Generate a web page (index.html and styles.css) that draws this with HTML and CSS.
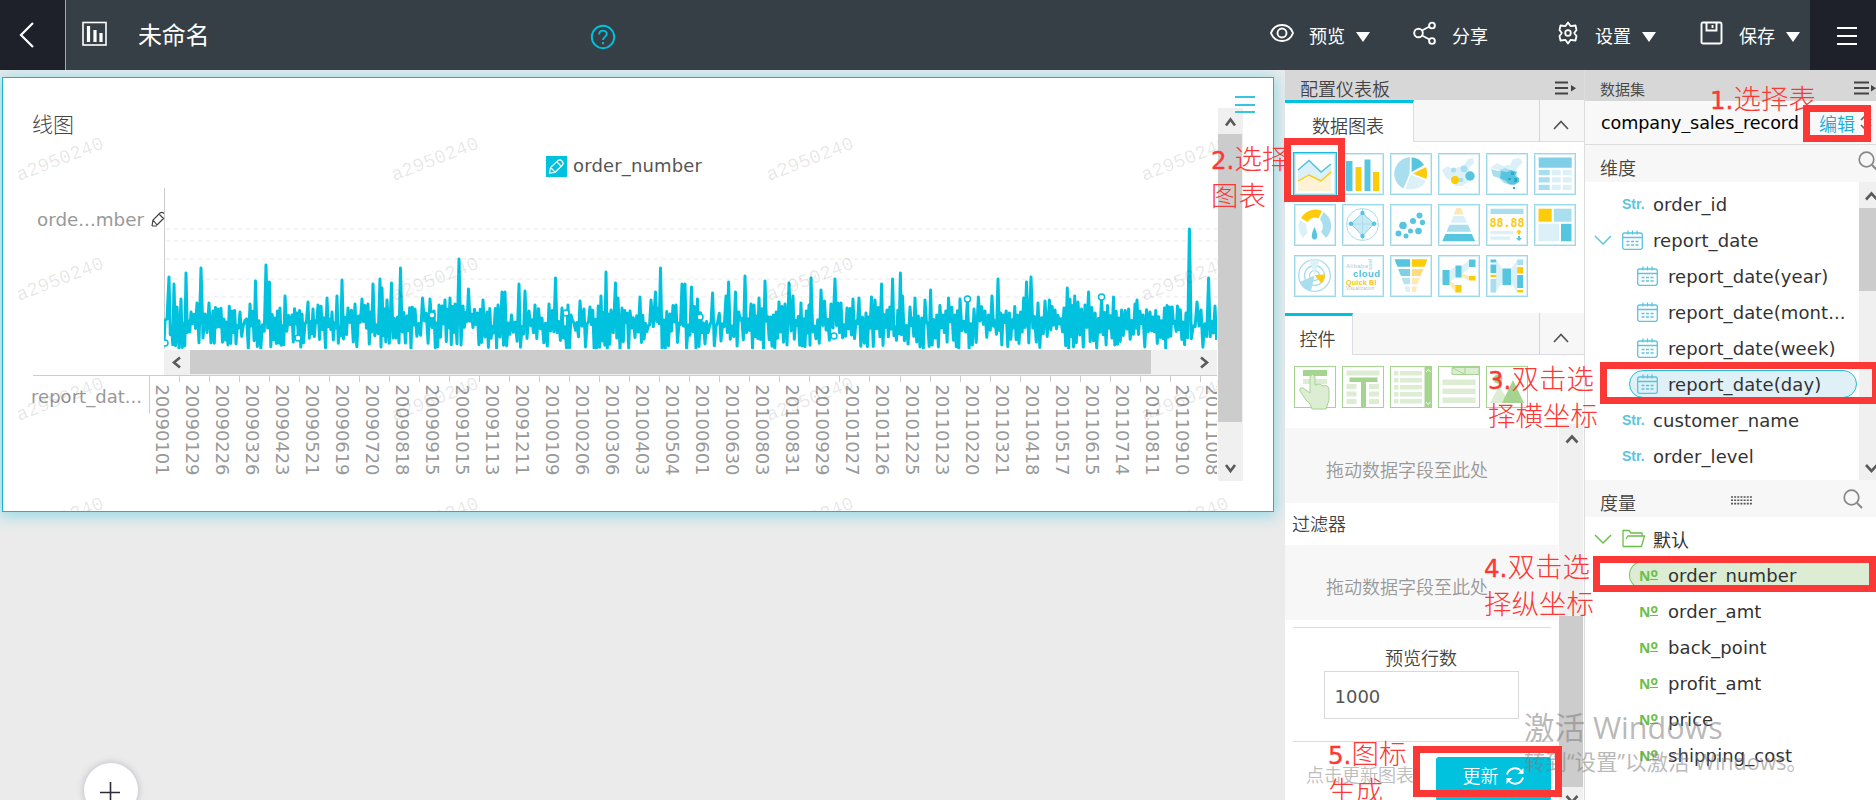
FILE: index.html
```html
<!DOCTYPE html>
<html lang="zh-CN">
<head>
<meta charset="utf-8">
<title>未命名</title>
<link rel="stylesheet" href="styles.css">
</head>
<body>
<div class="app">
  <header class="topbar">
    <div class="back"><svg width="66" height="70"><path d="M33 23 21 35 33 47" fill="none" stroke="#fff" stroke-width="2.200"/></svg></div>
    <svg class="logo" width="26" height="26"><rect x="1" y="1.5" width="23" height="22.5" fill="none" stroke="#fff" stroke-width="1.6"/><path d="M6.5 5v16M13 9v12M19 12v9" stroke="#fff" stroke-width="3.2"/></svg>
    <div class="doc-title">未命名</div>
    <svg class="help" width="26" height="26" fill="none" stroke="#00c1de" stroke-width="1.9"><circle cx="13" cy="13" r="11.2"/><path d="M9.2 10.4c0-5 7.6-5 7.6-.3 0 2.8-3.8 2.8-3.8 6"/><path d="M13 18v2.2"/></svg>
    <nav class="actions">
      <div class="action a-view"><svg width="24" height="24" fill="none" stroke="#fff" stroke-width="1.9"><path d="M1 12C3 6.500 7.500 4 12 4s9 2.500 11 8c-2 5.500-6.500 8-11 8S3 17.500 1 12z"/><circle cx="12" cy="12" r="4.500"/></svg><span>预览</span><i class="tri"></i></div>
      <div class="action a-share"><svg width="24" height="24" fill="none" stroke="#fff" stroke-width="1.9"><circle cx="5.500" cy="12" r="4.300"/><circle cx="19" cy="4.500" r="2.900"/><circle cx="19" cy="20" r="2.900"/><path d="M9 9.500l7.500-4M9 14.500l7.500 4"/></svg><span>分享</span></div>
      <div class="action a-set"><svg width="24" height="24" fill="none" stroke="#fff" stroke-width="1.8"><path d="M12 1.500l2.500 3.600 5-.6 1 4.500-2.300 3 2.300 3-1 4.500-5-.6L12 22.500l-2.500-3.600-5 .6-1-4.500 2.300-3-2.300-3 1-4.500 5 .6z" stroke-linejoin="round"/><circle cx="12" cy="12" r="2.800"/></svg><span>设置</span><i class="tri"></i></div>
      <div class="action a-save"><svg width="24" height="24" fill="none" stroke="#fff" stroke-width="1.9"><rect x="1.500" y="1.500" width="20" height="21" rx="1.500"/><path d="M6.500 2v7.500h10V2M12.500 4v3"/></svg><span>保存</span><i class="tri"></i></div>
    </nav>
    <div class="burger"><i></i><i></i><i></i></div>
  </header>

  <div class="work">
    <main class="canvas">
      <section class="card">
        <div class="card-title">线图</div>
        <div class="legend"><svg width="21" height="21"><rect width="21" height="21" fill="#00c1de"/><g fill="none" stroke="#fff" stroke-width="1.200"><path d="M3.500 17l1-5.500L12 4.500q2-1.500 4 .5t.5 4L9 16.500z"/><path d="M11 6l4.500 4.500M5 12l4 4"/></g></svg><span>order_number</span></div>
        <svg class="plot" id="plot" viewBox="3 183 1270 328" width="1270" height="328"></svg>
        <svg class="marks" id="marks" viewBox="3 78 1270 433" width="1270" height="433"></svg>
        <div class="vscroll"><svg width="25" height="26"><path d="M8 17.500l4.500-6 4.500 6" fill="none" stroke="#5a5a5a" stroke-width="2.600"/></svg><div class="thumb"></div><svg width="25" height="26"><path d="M8 10l4.500 6 4.500-6" fill="none" stroke="#5a5a5a" stroke-width="2.600"/></svg></div>
        <div class="card-menu"><i></i><i></i><i></i></div>
      </section>
      <div class="add"><svg width="54" height="54"><path d="M16 29.500h20M26.500 19v21" stroke="#2b2b3c" stroke-width="1.600"/></svg></div>
    </main>

    <aside class="config">
      <div class="panel-head"><span>配置仪表板</span><svg width="24" height="14"><path d="M0 1.500h13M0 7h13M0 12.500h13" stroke="#444" stroke-width="1.800"/><path d="M16 4l5 3.200-5 3.200z" fill="#444"/></svg></div>
      <div class="tabs"><div class="tab t1">数据图表</div><div class="tab-fill"></div><div class="fold"><svg width="20" height="12"><path d="M3 10l7-7.500 7 7.500" fill="none" stroke="#555" stroke-width="1.700"/></svg></div></div>
      <div class="icons blue">
        <svg viewBox="0 0 42 42" class="sel"><path class="p" d="M4 17 15 7 27 19 37 11V38H4z"/><path fill="#fdf2d6" d="M4 28 15 22 27 28 37 19V38H4z"/><path d="M4 17 15 7.500 27 19 37 11" fill="none" stroke="#4fc1dc" stroke-width="1.400"/><path d="M4 28 15 22 27 28 37 19" fill="none" stroke="#fccb0a" stroke-width="1.400"/></svg>
        <svg viewBox="0 0 42 42"><path class="b" d="M4 8h6.500v30H4zM22.500 6.500H28.500V38h-6z"/><path class="y" d="M13.500 14h6v24h-6zM31 19h6.200v19H31z"/></svg>
        <svg viewBox="0 0 42 42"><path class="m" d="M20 4.200A16.500 16.500 0 0 0 13.500 35.500L19.500 21z"/><path class="b" d="M21.600 4.200A16 16 0 0 1 34 12L21.600 19z"/><path class="y" d="M36 14q2 7 .3 12L23 20.500z"/><path class="p" d="M20.500 21.500 36 28Q30 38.500 15.500 36z"/></svg>
        <svg viewBox="0 0 42 42"><path class="p" d="M4 17l6-4 4 3 7-2 6-3 3-5 5-1 1 5-5 5 1 7-2 7-6 4-7 0-3-5-6-3z"/><path class="p" d="M27 34l2-1-.5 3z"/><g class="m"><circle cx="15.500" cy="17" r="2.500"/><circle cx="26" cy="16" r="3.300"/><circle cx="23" cy="27" r="2.300"/></g><circle class="b" cx="32" cy="23" r="4.700"/><circle class="y" cx="17" cy="27" r="4"/></svg>
        <svg viewBox="0 0 42 42"><path class="p" d="M4 15l7-5 6 3 7-1 3-6 6-1 4 4-6 6-1 6z"/><path class="m" d="M5 16l7 2 7-3 8 3 3 2 2 6-7 6-7-2-5-5-6-2z"/><path class="b" d="M15 18l6 1 4-2 6 2-2 4 4 2 0 4-5 3-5-1-3-3-6-3z"/><path fill="#30a9c9" d="M25 19h3v3h-3zM22 25h3v2h-3zM28 25h3v4h-3zM27 34h2v2h-2z"/></svg>
        <svg viewBox="0 0 42 42"><path fill="#7fd0e6" d="M4.700 4.500h33v10.300h-33z"/><path class="m" d="M4.700 17h11v5.200h-11zM4.700 24.300h11v5.200h-11zM4.700 31.800h11V37h-11z"/><path class="p" d="M18 17h8.700v5.200H18zM28.700 17h9v5.200h-9zM18 24.300h8.700v5.200H18zM28.700 24.300h9v5.200h-9zM18 31.800h8.700V37H18zM28.700 31.800h9V37h-9z"/></svg>
        <svg viewBox="0 0 42 42"><path class="y" d="M7 14A16.500 16.500 0 0 1 28 7L24.500 14.200A9 9 0 0 0 13.500 18z"/><path class="m" d="M29.500 8A16.500 16.500 0 0 1 32 34L27 28A9.500 9.500 0 0 0 26 15.500z"/><path class="p" d="M6 16A16.500 16.500 0 0 0 9 34L14 28A9 9 0 0 1 12.500 20z"/><path class="b" d="M20.500 23q5.500 12 0 12.500-5.500-.5 0-12.500z"/></svg>
        <svg viewBox="0 0 42 42"><circle cx="20.500" cy="20.500" r="16" fill="none" stroke="#a8deed"/><path d="M20.500 9 32 19.800 20.500 32 9 19.800z" fill="#c9e9f3" stroke="#8ad3e6"/><path d="M20.500 5v31M5 20h31" stroke="#a8deed"/><g class="b"><circle cx="20.500" cy="9" r="2.200"/><circle cx="32" cy="19.800" r="2.200"/><circle cx="20.500" cy="32" r="2.200"/><circle cx="9" cy="19.800" r="2.200"/></g></svg>
        <svg viewBox="0 0 42 42"><g class="b"><circle cx="13" cy="21.500" r="3.800"/><circle cx="23" cy="17" r="3"/><circle cx="29.500" cy="11.500" r="3"/><circle cx="32.500" cy="18.500" r="2.700"/><circle cx="28.500" cy="27" r="3.300"/><circle cx="20.500" cy="27" r="2.500"/><circle cx="16" cy="32" r="2.500"/><circle cx="8.500" cy="29.500" r="3"/></g></svg>
        <svg viewBox="0 0 42 42"><path fill="#fce8b4" d="M18.500 4h4.500l2.700 6.500h-10z"/><path class="p" d="M15.500 12H26l3 6.700H12.500z"/><path class="m" d="M11.500 20.700h18.500l3 7H8.500z"/><path class="b" d="M7.500 30h26.200l3.500 7.200H4.200z"/></svg>
        <svg viewBox="0 0 42 42"><path class="m" d="M4.500 4.700h33v5.200h-33z"/><text x="3.500" y="22.800" font-size="12.500" textLength="35" lengthAdjust="spacingAndGlyphs" fill="#fccb0a" class="mono">88.88</text><path class="p" d="M4.500 27H27v3.200H4.500zM4.500 32.500H24v3.200H4.500z"/><path class="y" d="M33 25.500l3 3h-2v2h-2v-2h-2z"/><path class="b" d="M33 37l3-3h-2v-2h-2v2h-2z"/></svg>
        <svg viewBox="0 0 42 42"><path class="y" d="M4.500 4.700h13.200v13H4.500z"/><path class="m" d="M19.800 4.700h17.700v13H19.800z"/><path class="p" d="M4.500 19.800H25v17.500H4.500z"/><path class="b" d="M27 19.800h10.500v17.500H27z"/></svg>
        <svg viewBox="0 0 42 42"><g fill="none" stroke="#a8deed" stroke-width="1.300"><circle cx="20.500" cy="20.500" r="15.800"/><circle cx="20.500" cy="20.500" r="10"/><circle cx="20.500" cy="20.500" r="5"/></g><path class="p" d="M20.500 20.500 15.500 5q5-1.500 10 0z"/><path class="y" d="M20.500 20 31 19.500q0 5-3.500 9z"/><path class="m" d="M20.500 20.500 17 36Q9 34 6 27z"/></svg>
        <svg viewBox="0 0 42 42" class="words"><text x="4" y="13" font-size="6" textLength="22" fill="#a8cbd6">Alibaba</text><text x="11" y="22" font-size="9.500" textLength="27" fill="#4fc1dc" font-weight="700">cloud</text><text x="4" y="29.500" font-size="7.200" textLength="30.500" fill="#f5c417" font-weight="700">Quick BI</text><text x="4" y="35" font-size="4.500" textLength="28" fill="#bbb">Visualization</text><text transform="translate(30,15) rotate(-90)" font-size="5" fill="#7fd0e6">word</text></svg>
        <svg viewBox="0 0 42 42"><path class="b" d="M4.500 4.200H20v7.500H7.500z"/><path fill="#7fd0e6" d="M8 14h12v7h-9z"/><path fill="#b7e2ee" d="M11.500 22.800H20v6.500h-6z"/><path class="p" d="M14.500 31.500H20V37h-4z"/><path class="y" d="M21.800 4.200h15.700l-3 7.500H21.800z"/><path fill="#fddc80" d="M21.800 14H33.500l-3 7h-8.700z"/><path fill="#fdeab5" d="M21.800 22.800h8.200l-2.500 6.500h-5.700zM21.800 31.500H27L25.500 37h-3.700z"/></svg>
        <svg viewBox="0 0 42 42"><path class="p" d="M11 16 18 11V22l-7 6zM23 12l8-7v8l-8 7z"/><path fill="#fdeab5" d="M11 25l7 5v8l-7-9zM23 18l8 3v4l-8-3z"/><path class="b" d="M4.500 15H11.500V30h-7zM17.500 10.500H23.500V22.500h-6zM31 4.500h6.500V12H31z"/><path class="y" d="M17.500 30h6v7.500h-6zM31 21h6.500v4.500H31z"/></svg>
        <svg viewBox="0 0 42 42"><path class="p" d="M10 4.500l7 10v12l-7 10zM31 5l-6 9v14l6 9z"/><path class="b" d="M4.500 4.500h5.700v3H4.500zM4.500 9.500h5.700V18H4.500zM16.500 13.500H25V30h-8.500zM31.200 20h6v13h-6z"/><path class="m" d="M4.500 24h5.700v13.500H4.500zM31.200 4.500h6V10h-6z"/><path class="y" d="M4.500 19.800h5.700v2.400H4.500zM31.200 12h6v6.500h-6zM31.200 35h6v2.500h-6z"/></svg>
      </div>
      <div class="tabs"><div class="tab t2">控件</div><div class="tab-fill"></div><div class="fold"><svg width="20" height="12"><path d="M3 10l7-7.500 7 7.500" fill="none" stroke="#555" stroke-width="1.700"/></svg></div></div>
      <div class="icons green">
        <svg viewBox="0 0 42 42"><path class="g" d="M9 4h24v6H9z"/><path class="l" d="M9 13h24v5H9z"/><path d="M18 43q-1-6-6-9L6 25q-1-4 3-3l7 5V11q2.500-5 5 0v8q6-2 7 1 6-2 7 3v11l-3 9z" class="l" stroke="#a5d491"/></svg>
        <svg viewBox="0 0 42 42"><path class="l" d="M4.500 4.500h33v5h-33zM4.500 18h10v5h-10zM4.500 25.500h10v5h-10zM4.500 33h10v5h-10zM27 18h10v5H27zM27 25.500h10v5H27zM27 33h10v5H27z"/><path class="g" d="M7.500 11.500h28v4.500H24v25h-5V16H7.500z"/></svg>
        <svg viewBox="0 0 42 42"><path class="l" d="M4 5h4.500v4.500H4zM4 12h4.500v4.500H4zM4 19h4.500v4.500H4zM4 26h4.500v4.500H4zM4 33h4.500v4.500H4zM10 5h22v4.500H10zM10 12h22v4.500H10zM10 19h22v4.500H10zM10 26h22v4.500H10zM10 33h22v4.500H10z"/><path class="g" d="M34.500 0H42v42h-7.500z"/><path d="M36 6l2.200-2.500L40.500 6M36 36l2.200 2.500 2.300-2.500" stroke="#fff" fill="none"/></svg>
        <svg viewBox="0 0 42 42"><path d="M14 1.500v7h13v-7m0 7h14v-7H14z" fill="#dcedd3" stroke="#a5d491"/><path class="l" d="M4.500 13.500h33v5.500h-33zM4.500 22.500h33V28h-33zM4.500 31.500h33V37h-33z"/></svg>
        <svg viewBox="0 0 42 42"><circle class="g" cx="12" cy="13" r="4.500"/><path class="l" d="M4 37 13 20l11 17z"/><path class="g" d="M16 37 27 14l11 23z"/></svg>
      </div>
      <div class="fields">
        <div class="field-list">
          <div class="drop">拖动数据字段至此处</div>
          <div class="filter">过滤器</div>
          <div class="drop">拖动数据字段至此处</div>
          <div class="limit"><label>预览行数</label><div class="input">1000</div></div>
          <div class="update"><span>点击更新图表</span><button>更新<svg width="20" height="20" fill="none" stroke="#fff" stroke-width="1.900"><path d="M2 8.500A8 8 0 0 1 16.500 6M18 11.500A8 8 0 0 1 3.500 14"/><path d="M18.500 2v6h-6zM1.500 18v-6h6z" fill="#fff" stroke="none"/></svg></button></div>
        </div>
        <div class="pscroll"><svg width="25" height="20"><path d="M7.500 18.500l5.500-6 5.500 6" fill="none" stroke="#5a5a5a" stroke-width="2.600"/></svg><div class="pthumb"></div><svg width="25" height="20"><path d="M7.500 9l5.500 6 5.500-6" fill="none" stroke="#5a5a5a" stroke-width="2.600"/></svg></div>
      </div>
    </aside>

    <aside class="dataset">
      <div class="panel-head ds"><span>数据集</span><svg width="24" height="14"><path d="M0 1.500h15M0 7h15M0 12.500h15" stroke="#444" stroke-width="1.800"/><path d="M17 4l5 3.200-5 3.200z" fill="#444"/></svg></div>
      <div class="picker"><span>company_sales_record</span><a>编辑</a><svg width="14" height="20"><path d="M2 7l5-5 5 5M2 12l5 5 5-5" fill="none" stroke="#666" stroke-width="1.700"/></svg></div>
      <div class="group"><span>维度</span><svg class="s1" width="22" height="22"><circle cx="8.500" cy="8.500" r="7.300" fill="none" stroke="#888" stroke-width="1.700"/><path d="M14 14l5 5" stroke="#888" stroke-width="2"/></svg></div>
      <div class="dims">
        <div class="tree">
          <div class="row"><b class="str">Str.</b>order_id</div>
          <div class="row"><svg class="chev" width="18" height="12"><path d="M1 2l8 8 8-8" fill="none" stroke="#5bc4e0" stroke-width="1.500"/></svg><svg class="cal"><use href="#cal"/></svg>report_date</div>
          <div class="row sub"><svg class="cal"><use href="#cal"/></svg>report_date(year)</div>
          <div class="row sub"><svg class="cal"><use href="#cal"/></svg>report_date(mont...</div>
          <div class="row sub"><svg class="cal"><use href="#cal"/></svg>report_date(week)</div>
          <div class="row sub pill"><svg class="cal"><use href="#cal"/></svg>report_date(day)</div>
          <div class="row"><b class="str">Str.</b>customer_name</div>
          <div class="row"><b class="str">Str.</b>order_level</div>
        </div>
        <div class="dscroll"><svg width="25" height="26"><path d="M7 17.500l5.500-6 5.500 6" fill="none" stroke="#5a5a5a" stroke-width="2.600"/></svg><div class="dthumb"></div><svg width="25" height="26"><path d="M7 11l5.500 6 5.500-6" fill="none" stroke="#5a5a5a" stroke-width="2.600"/></svg></div>
      </div>
      <div class="group measure"><span>度量</span><svg class="grip" width="21" height="9"><path d="M0 1h21M0 4.300h21M0 7.600h21" stroke="#555" stroke-width="1.600" stroke-dasharray="2 1.150"/></svg><svg width="22" height="22"><circle cx="8.500" cy="8.500" r="7.300" fill="none" stroke="#888" stroke-width="1.700"/><path d="M14 14l5 5" stroke="#888" stroke-width="2"/></svg></div>
      <div class="tree nums">
        <div class="row"><svg class="chev" width="18" height="12"><path d="M1 2l8 8 8-8" fill="none" stroke="#6abf4b" stroke-width="1.500"/></svg><svg class="folder" width="23" height="19" fill="none" stroke="#6abf4b" stroke-width="1.300"><path d="M1 17.500V1.500h6l2 2.500h11v3M1 17.500h18.500L22.500 7H6L4 10"/></svg>默认</div>
        <div class="row sub gpill"><b class="no">N<u>o</u></b>order_number</div>
        <div class="row sub"><b class="no">N<u>o</u></b>order_amt</div>
        <div class="row sub"><b class="no">N<u>o</u></b>back_point</div>
        <div class="row sub"><b class="no">N<u>o</u></b>profit_amt</div>
        <div class="row sub"><b class="no">N<u>o</u></b>price</div>
        <div class="row sub"><b class="no">N<u>o</u></b>shipping_cost</div>
      </div>
    </aside>
  </div>

  <div class="activate"><div>激活 Windows</div><p>转到“设置”以激活 Windows。</p></div>

  <div class="note n1"><b>1.</b>选择表</div>
  <div class="note n2"><b>2.</b>选择<br>图表</div>
  <div class="note n3"><b>3.</b>双击选<br>择横坐标</div>
  <div class="note n4"><b>4.</b>双击选<br>择纵坐标</div>
  <div class="note n5"><b>5.</b>图标<br>生成</div>
  <div class="box b1"></div><div class="box b2"></div><div class="box b3"></div><div class="box b4"></div><div class="box b5"></div>
</div>

<svg width="0" height="0" class="defs"><symbol id="cal" viewBox="0 0 21 20"><g fill="none" stroke="#5bc4e0" stroke-width="1.300"><rect x=".7" y="3" width="19.600" height="16.300" rx="2"/><path d="M1 7.500h19M6 .5v4M10.500 .5v4M15 .5v4"/><path d="M4.500 11.500h12M4.500 15h12" stroke-dasharray="3 1.500"/></g></symbol></svg>
<script src="chart.js"></script>
</body>
</html>
```

FILE: styles.css
```css
* { box-sizing: border-box; }
body { margin: 0; overflow: hidden; font-family: "DejaVu Sans", "Noto Sans CJK SC", sans-serif; font-size: 18px; color: #333; }
.app { position: relative; width: 1876px; height: 800px; overflow: hidden; background: #ebebeb; display: flex; flex-direction: column; }
svg { display: block; flex: none; }
.defs { position: absolute; }
span, a, label { white-space: nowrap; font-weight: 350; }

.topbar { height: 70px; flex: none; background: #353f45; display: flex; align-items: center; color: #fff; }
.back { width: 66px; height: 70px; background: #1e2129; border-right: 1px solid #a5a8aa; }
.logo { margin: 0 0 2px 16px; }
.doc-title { margin: 2px 0 0 30px; width: 452px; font-size: 24px; line-height: 70px; letter-spacing: -.2px; }
.help { margin-top: 4px; }
.actions { display: flex; flex: 1; height: 70px; align-items: center; }
.action { display: flex; align-items: center; }
.action svg { margin-bottom: 5px; }
.action span { margin-left: 15px; font-weight: 400; }
.tri { border: 7px solid transparent; border-top: 10px solid #fff; border-bottom: 0; margin: 4px 0 0 11px; }
.a-view { margin-left: 654px; }
.a-share { margin-left: 43px; }
.a-share span { margin-left: 15px; }
.a-set { margin-left: 68px; }
.a-save { margin-left: 44px; }
.burger { width: 66px; height: 70px; flex: none; background: #1e2129; padding: 27px 19px 0 27px; display: flex; flex-direction: column; gap: 6px; }
.burger i { height: 2px; background: #fff; }

.work { display: flex; flex: 1; min-height: 0; }
.canvas { width: 1285px; flex: none; padding: 7px 0 0 2px; overflow: hidden; position: relative; }
.card { position: relative; width: 1272px; height: 435px; background: #fff; border: 1px solid #17b6cf; box-shadow: 0 2px 14px 2px rgba(0, 193, 222, .38); }
.card-title { height: 71px; padding: 22px 0 0 29px; line-height: 50px; font-size: 21px; font-weight: 300; color: #444; }
.legend { height: 34px; padding-left: 543px; display: flex; align-items: center; gap: 6px; color: #555; }
.legend span { font-weight: 400; letter-spacing: .15px; margin-bottom: 1px; }
.marks { position: absolute; left: 0; top: 0; }
.marks text { font: 19px "Liberation Mono", monospace; fill: #000; fill-opacity: .1; }
.plot text { font-family: "DejaVu Sans", sans-serif; font-size: 18px; fill: #999; }
.vscroll { position: absolute; left: 1215px; top: 30px; width: 25px; height: 373px; background: #f0f0f0; display: flex; flex-direction: column; }
.vscroll .thumb { height: 288px; background: #ccc; margin-bottom: 33px; width: 24px; }
.card-menu { position: absolute; left: 1232px; top: 18px; width: 20px; display: flex; flex-direction: column; gap: 5.500px; }
.card-menu i { height: 2px; background: #38c4dc; }
.add { position: absolute; left: 84px; top: 693px; width: 54px; height: 54px; border-radius: 50%; background: #fff; box-shadow: 0 0 7px rgba(80, 90, 120, .35); }

.config { width: 299px; flex: none; background: #fff; display: flex; flex-direction: column; }
.panel-head { height: 30px; flex: none; background: #d7d7d7; display: flex; align-items: center; justify-content: space-between; padding: 5px 6px 0 15px; color: #444; }
.config .panel-head { padding-right: 5px; }
.tabs { height: 42px; flex: none; display: flex; background: #f7f7f7; }
.tab { background: #fff; border-top: 3px solid #00c1de; border-right: 1px solid #dcdce2; color: #444; display: flex; align-items: center; justify-content: center; padding: 4px 2px 0 0; font-weight: 350; }
.t1 { width: 129px; }
.t2 { width: 68px; }
.tab-fill { flex: 1; border-bottom: 1px solid #dcdce2; border-right: 1px solid #d5d5d5; }
.fold { width: 44px; border-bottom: 1px solid #dcdce2; padding: 19px 0 0 11px; }
.icons { display: grid; grid-template-columns: repeat(6, 42px); gap: 9px 6px; padding: 11px 9px 0; }
.icons svg { width: 42px; height: 42px; background: #fff; overflow: visible; }
.blue { height: 171px; flex: none; align-content: start; }
.blue svg { box-shadow: inset 0 0 0 1px #9bd9e8, inset 0 0 0 2px #d3eef5; }
.blue .sel { box-shadow: 0 0 0 1px #1fb9d4, inset 0 0 0 1px #9bd9e8, inset 0 0 0 2px #d3eef5; }
.b { fill: #56c5e0; }
.m { fill: #a8deed; }
.p { fill: #dcf0f8; }
.y { fill: #fccb0a; }
.g { fill: #a5d491; }
.l { fill: #dcedd3; }
.mono { font-family: "DejaVu Sans Mono", monospace; font-weight: 700; }
.words text { font-family: "Liberation Sans", sans-serif; }
.green { height: 69px; flex: none; align-content: start; }
.green svg { box-shadow: inset 0 0 0 1px #a5d491; }
.fields { display: flex; flex: 1; min-height: 0; }
.field-list { width: 273px; padding-top: 4px; margin-right: 1px; }
.drop { height: 75px; background: #f7f7f7; color: #999; line-height: 86px; font-weight: 350; padding-left: 41px; }
.filter { height: 42px; line-height: 44px; padding-left: 7px; color: #444; font-weight: 350; }
.limit { margin: 7px 7px 0 8px; border-top: 1px solid #ddd; border-bottom: 1px solid #ddd; height: 115px; display: flex; flex-direction: column; align-items: center; color: #444; padding-right: 2px; }
.limit label { padding-top: 18px; line-height: 25px; }
.input { width: 195px; height: 48px; border: 1px solid #d9d9d9; padding-left: 10px; line-height: 50px; color: #555; }
.update { display: flex; padding: 15px 7px 0 21px; color: #bdbdbd; line-height: 37px; }
.update span { width: 130px; overflow: hidden; }
.update button { width: 115px; height: 44px; border: 0; border-radius: 3px; background: #00c1de; color: #fff; font: inherit; font-weight: 350; display: flex; align-items: center; justify-content: center; gap: 6px; padding: 0 0 6px; }
.pscroll { width: 25px; background: #f0f0f0; display: flex; flex-direction: column; border-right: 1px solid #fafafa; }
.pthumb { margin-top: 172px; height: 171px; flex: none; background: #ccc; }

.dataset { width: 292px; flex: none; background: #fff; border-left: 1px solid #ddd; overflow: hidden; display: flex; flex-direction: column; }
.ds { font-size: 15px; height: 31px; padding: 5px 0 0 15px; justify-content: flex-start; }
.ds svg { margin-left: 209px; }
.picker { height: 44px; flex: none; background: #f8f8f8; border-bottom: 1px solid #ddd; padding-left: 16px; display: flex; align-items: center; color: #000; font-size: 17.600px; }
.picker span { width: 218px; overflow: hidden; font-weight: 400; letter-spacing: -.1px; }
.picker a { color: #1aacd4; width: 40px; font-size: 18px; }
.group { height: 37px; flex: none; background: #f7f7f7; display: flex; align-items: center; justify-content: space-between; padding: 6px 3px 0 15px; color: #444; }
.group .s1 { margin: -9px -7px 0 0; }
.measure { padding-right: 11px; padding-left: 15px; }
.measure svg { margin-top: -4px; }
.measure .grip { margin: -2px 0 0 3px; }
.dims { display: flex; height: 298px; flex: none; }
.tree { width: 274px; flex: none; padding-top: 4px; }
.row { height: 36px; display: flex; align-items: center; padding-left: 37px; position: relative; white-space: nowrap; letter-spacing: .1px; }
.sub { padding-left: 52px; }
.row .cal { width: 21px; height: 20px; margin: 0 10px 0 0; }
.row .folder { margin: 0 8px 2px 0; }
.row .chev { margin: 0 10px 0 -28px; }
.str { width: 31px; font: 700 14px "Liberation Sans", sans-serif; color: #5bc4e0; letter-spacing: 0; }
.no { width: 29px; margin-left: 2px; font: 700 14px "Noto Sans", sans-serif; color: #6abf4b; letter-spacing: 0; display: flex; align-items: center; }
.no u { text-decoration: none; font-size: 12px; line-height: 9px; border-bottom: 1.500px solid #6abf4b; margin-top: -2px; padding-bottom: 2px; }
.pill { margin-left: 44px; width: 228px; height: 28px; margin-top: 4px; margin-bottom: 4px; padding-left: 7px; border: 1px solid #1fbfd9; border-radius: 14px; background: #dff0f6; }
.gpill { margin: 4px 0 4px 44px; width: 247px; height: 28px; padding-left: 7px; border: 1px solid #7cc463; border-right: 0; border-radius: 14px 0 0 14px; background: #dcedd3; }
.dscroll { width: 25px; flex: none; background: #f0f0f0; display: flex; flex-direction: column; }
.dthumb { height: 83px; background: #ccc; margin-bottom: 163px; }
.nums { width: 291px; }

.activate { position: absolute; left: 1524px; top: 706px; color: rgba(125, 125, 125, .55); font-family: "Open Sans", "Noto Sans CJK SC", sans-serif; white-space: nowrap; }
.activate div { font-size: 30.500px; line-height: 42px; }
.activate p { margin: 0; font-size: 21.500px; line-height: 28px; }

.note { position: absolute; color: #fc3836; font-family: "DejaVu Sans", "Noto Sans CJK SC", sans-serif; font-size: 27.500px; line-height: 34.500px; font-weight: 300; white-space: nowrap; }
.note b { font-size: 24.500px; font-weight: 400; -webkit-text-stroke: .4px #fc3836; }
.n1 { left: 1710px; top: 82px; }
.n2 { left: 1211px; top: 142px; }
.n3 { left: 1488px; top: 362px; }
.n4 { left: 1484px; top: 550px; }
.n5 { left: 1328px; top: 737px; }
.box { position: absolute; border: 7px solid #fc3836; }
.b1 { left: 1803px; top: 105px; width: 68px; height: 37px; }
.b2 { left: 1284px; top: 138px; width: 61px; height: 64px; }
.b3 { left: 1600px; top: 362px; width: 279px; height: 42px; }
.b4 { left: 1593px; top: 556px; width: 283px; height: 36px; }
.b5 { left: 1413px; top: 746px; width: 149px; height: 51px; }
```

FILE: chart.js
```js
// Daily order_number peaks as [x, y] in chart coordinates.
const peaks = [[165,320],[169,277],[174,284],[177,307],[181,299],[186,273],[191,312],[197,303],[201,268],[205,314],[209,303],[213,311],[218,309],[224,319],[232,311],[240,312],[250,304],[255.5,281],[266,265],[269.4,282],[275,318],[280,308],[285,296],[292,315],[297,313],[302,314],[308,302],[313,309],[318,305],[327,298],[332,312],[337,296],[342,280],[348,308],[355,304],[362,299],[368,304],[373,284],[380,279],[382,288],[387,300],[391.5,283],[400.5,268],[407,316],[415,309],[422.5,298],[430,299],[434,311],[439,305],[445,300],[450,298],[455,304],[459,259],[463,306],[468.5,289],[477.5,313],[483,300],[487,312],[498,305],[502,292],[505,292],[511.5,315],[519,284],[525,291],[529,311],[535,305],[542,318],[549,304],[555.5,278],[562,308],[571,315],[580,301],[584,309],[590,307],[601,296],[606,272],[611,310],[615.5,283],[618,298],[622,308],[630,311],[640,297],[651,300],[655.5,292],[660.5,268],[670,314],[676,305],[682,284],[685,284],[691.5,287],[697.5,299],[712.6,293],[726,296],[728.6,282],[735.5,292],[745,276],[751,304],[754,305],[759,298],[765,281],[779,302],[785,304],[789,283],[793,296],[801,303],[809,305],[811,278],[821,290],[824.5,301],[831,304],[835,279],[838,303],[841,303],[847,308],[853,299],[859,298],[866,313],[871.5,297],[875,300],[881.6,284],[887,310],[892.6,279],[900.4,273],[902.5,296],[910,307],[915,298],[925,300],[930.6,290],[943,315],[948.5,298],[955,315],[960,299],[967.5,299],[974,309],[978.4,297],[985,311],[992,296],[998,279],[1003,315],[1009.4,313],[1017.5,315],[1023.7,298],[1026.5,282],[1031,277],[1038,303],[1045,301],[1049.4,300],[1055,310],[1064,308],[1067.3,288],[1070,299],[1074.7,296],[1078,302],[1085,305],[1088.6,292],[1101.6,297],[1113.5,297],[1121.6,310],[1128.6,309],[1135,304],[1137,300],[1143,315],[1150,312],[1164.5,308],[1169.4,307],[1177.5,306],[1186,313],[1189.4,229],[1197,302],[1201,310],[1208.6,278],[1215,306]];
let seed = 41;
const rnd = () => (seed = (seed * 16807) % 2147483647) / 2147483647;

const pts = [[164, 344]];
peaks.forEach(([x, y], i) => {
  pts.push([x, y]);
  const nx = i + 1 < peaks.length ? peaks[i + 1][0] : 1218;
  const pairs = Math.max(1, Math.round((nx - x) / 3.1));
  for (let k = 0; k < pairs; k++) {
    const step = (nx - x) / pairs;
    pts.push([x + step * (k + .5), 319 + Math.pow(rnd(), .7) * 30]);
    if (k < pairs - 1) pts.push([x + step * (k + 1), 305 + rnd() * 22]);
  }
});

let s = '<clipPath id="c"><rect x="164" y="183" width="1053" height="166"/></clipPath><clipPath id="d"><rect x="30" y="370" width="1187" height="130"/></clipPath>';
for (const y of [229, 241, 259, 279, 297, 315, 333]) s += `<path d="M166 ${y}H1217" stroke="#f1f1f1" stroke-width="1.500" stroke-dasharray="4 4"/>`;
s += '<path d="M164.5 188V349" stroke="#ccc"/>';
s += `<polyline clip-path="url(#c)" points="${pts.map(p => p[0].toFixed(1) + ',' + p[1].toFixed(1)).join(' ')}" fill="none" stroke="#00c1de" stroke-width="3" stroke-linejoin="round"/>`;
s += '<g clip-path="url(#c)" fill="#fff" stroke="#00c1de" stroke-width="1.500">';
for (const [x, y] of [[165, 343], [298, 338], [432, 315], [566, 313], [700, 317], [834, 336], [967.5, 299], [1101.6, 297]]) s += `<circle cx="${x}" cy="${y}" r="3"/>`;
s += '</g>';
s += '<text x="37" y="225.500" textLength="107" lengthAdjust="spacingAndGlyphs">orde...mber</text>';
s += '<g fill="none" stroke="#444" stroke-width="1.200"><path d="M152 226l1-6 7-7q2-1.500 4 .5M164 218l-7 7zM152 226h5M153 220l4 5M159 214l4.500 4.500"/></g>';
s += '<rect x="164" y="350" width="1053" height="25" fill="#f0f0f0"/><rect x="190" y="350" width="961" height="24" fill="#ccc"/>';
s += '<path d="M180 357.500l-6 5 6 5M1201 357.500l6 5-6 5" fill="none" stroke="#5a5a5a" stroke-width="2.600"/>';
s += '<path d="M33 375.500H1217" stroke="#ccc"/><path d="M149.5 376V413.500" stroke="#ccc"/>';
s += '<text x="31" y="402.500" textLength="111" lengthAdjust="spacingAndGlyphs">report_dat...</text>';
const days = '20090101 20090129 20090226 20090326 20090423 20090521 20090619 20090720 20090818 20090915 20091015 20091113 20091211 20100109 20100206 20100306 20100403 20100504 20100601 20100630 20100803 20100831 20100929 20101027 20101126 20101225 20110123 20110220 20110321 20110418 20110517 20110615 20110714 20110811 20110910 20111008'.split(' ');
s += '<g clip-path="url(#d)">';
days.forEach((d, i) => {
  const x = 149.5 + i * 30.02;
  if (i) s += `<path d="M${Math.floor(x) + .5} 376v6" stroke="#ccc"/>`;
  s += `<text transform="translate(${(x + 6).toFixed(1)},384.500) rotate(90)" textLength="91">${d}</text>`;
});
s += '</g>';
document.getElementById('plot').innerHTML = s;

let m = '';
for (const y of [181, 301, 421, 541]) for (const x of [19, 394, 769, 1144]) m += `<text transform="translate(${x},${y}) rotate(-21)" textLength="92">a2950240</text>`;
document.getElementById('marks').innerHTML = m;
```
